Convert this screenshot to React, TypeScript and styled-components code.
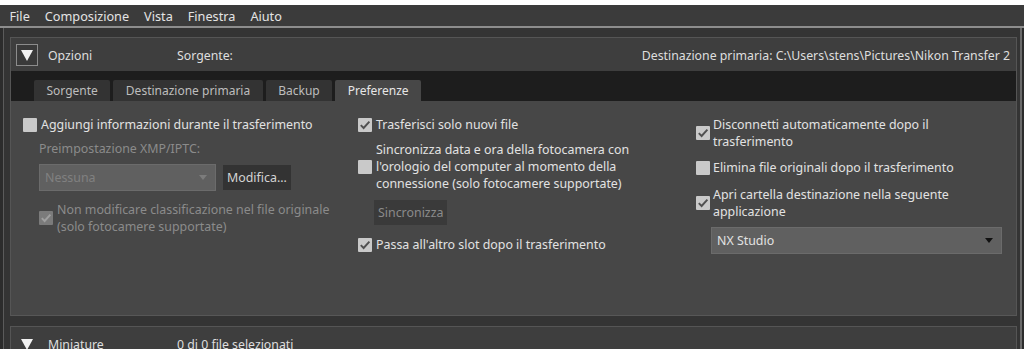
import React from "react";
import styled, { createGlobalStyle, css } from "styled-components";

const GlobalStyle = createGlobalStyle`
  html, body { margin: 0; padding: 0; background: #ffffff; }
  body { font-family: "Noto Sans", "Open Sans", sans-serif; font-size: 12.4px; }
  * { box-sizing: border-box; }
`;

const Page = styled.div`
  width: 1024px;
  height: 349px;
  overflow: hidden;
  display: flex;
  flex-direction: column;
  background: #ffffff;
`;

const TopStrip = styled.div`
  height: 5px;
  flex: none;
`;

const MenuBar = styled.div`
  height: 23px;
  flex: none;
  display: flex;
  align-items: center;
  padding-left: 2px;
  background: #3b3b3b;
  border-bottom: 2px solid #8d8d8d;
`;

const MenuItem = styled.span`
  padding: 0 7.5px;
  color: #e4e4e4;
  font-size: 12.7px;
  line-height: 20px;
`;

const Frame = styled.div`
  flex: 1;
  display: flex;
  background: #2c2c2c;
  padding-left: 3px;
  padding-right: 2px;
  min-height: 0;
`;

const Workspace = styled.div`
  flex: 1;
  display: flex;
  flex-direction: column;
  gap: 10px;
  background: #343434;
  border-left: 1px solid #5b5b5b;
  border-right: 2px solid #6a6a6a;
  padding: 9px 3px 0 6px;
  min-height: 0;
`;

const Panel = styled.section`
  border: 1px solid #555555;
  border-bottom-color: #575757;
  background: #3e3e3e;
  flex: none;
`;

const PanelHeader = styled.div`
  height: 33px;
  display: flex;
  align-items: center;
  padding: 1px 6px 0 5px;
  background: #3e3e3e;
  color: #dedede;
  font-size: 12.3px;
`;

const ToggleBox = styled.div<{ $framed?: boolean }>`
  width: 22px;
  height: 22px;
  display: flex;
  align-items: center;
  justify-content: center;
  border: 1px solid ${(p) => (p.$framed ? "#8c8c8c" : "transparent")};
  background: ${(p) => (p.$framed ? "#3a3a3a" : "transparent")};
  margin-right: 10px;
  margin-top: -1px;
  flex: none;
`;

const Triangle = styled.span`
  width: 0;
  height: 0;
  border-left: 6.5px solid transparent;
  border-right: 6.5px solid transparent;
  border-top: 11px solid #f2f2f2;
  margin-top: 1px;
`;

const HeaderTitle = styled.span`
  width: 129px;
  flex: none;
`;

const HeaderInfo = styled.span`
  flex: 1;
`;

const HeaderRight = styled.span`
  white-space: nowrap;
`;

const TabBar = styled.div`
  height: 30px;
  display: flex;
  align-items: flex-end;
  gap: 3px;
  padding-left: 23px;
  background: #1d1d1d;
`;

const Tab = styled.div<{ $active?: boolean }>`
  height: 21px;
  padding: 0 12.5px;
  display: flex;
  align-items: center;
  font-size: 12px;
  border-radius: 2px 2px 0 0;
  background: ${(p) => (p.$active ? "#474747" : "#333333")};
  color: ${(p) => (p.$active ? "#e6e6e6" : "#bdbdbd")};
`;

const TabContent = styled.div`
  height: 214px;
  background: #474747;
  display: grid;
  grid-template-columns: 335px 338px 1fr;
  padding: 15px 0 0 12px;
`;

const Column = styled.div`
  display: flex;
  flex-direction: column;
  align-items: flex-start;
`;

const CheckRow = styled.div<{ $indent?: number; $gap?: number; $disabled?: boolean; $mt?: number }>`
  display: flex;
  align-items: center;
  gap: ${(p) => p.$gap ?? 4}px;
  margin-left: ${(p) => p.$indent ?? 0}px;
  margin-top: ${(p) => p.$mt ?? 0}px;
  color: ${(p) => (p.$disabled ? "#8b8b8b" : "#e2e2e2")};
  font-size: 12.4px;
  line-height: 17px;
`;

const Box = styled.span<{ $disabled?: boolean }>`
  width: 14px;
  height: 14px;
  flex: none;
  display: flex;
  align-items: center;
  justify-content: center;
  border-radius: 1px;
  background: ${(p) => (p.$disabled ? "#7b7b7b" : "#c9c9c9")};
`;

const Label = styled.span``;

const Caption = styled.div<{ $indent?: number; $mt?: number }>`
  margin-left: ${(p) => p.$indent ?? 0}px;
  margin-top: ${(p) => p.$mt ?? 0}px;
  color: #8b8b8b;
  font-size: 12.4px;
  line-height: 17px;
`;

const ControlRow = styled.div<{ $indent?: number; $mt?: number }>`
  display: flex;
  align-items: center;
  gap: 7px;
  margin-left: ${(p) => p.$indent ?? 0}px;
  margin-top: ${(p) => p.$mt ?? 0}px;
`;

const Select = styled.div<{ $width: number; $disabled?: boolean }>`
  width: ${(p) => p.$width}px;
  height: 27px;
  display: flex;
  align-items: center;
  justify-content: space-between;
  padding: 0 8px 0 5px;
  background: #606060;
  border: 1px solid #6b6b6b;
  font-size: 12.4px;
  color: ${(p) => (p.$disabled ? "#808080" : "#e2e2e2")};
`;

const Arrow = styled.span<{ $disabled?: boolean }>`
  width: 0;
  height: 0;
  border-left: 4.5px solid transparent;
  border-right: 4.5px solid transparent;
  border-top: 5px solid ${(p) => (p.$disabled ? "#7c7c7c" : "#111111")};
`;

const Button = styled.div<{ $disabled?: boolean; $mt?: number; $indent?: number }>`
  height: 25px;
  display: inline-flex;
  align-items: center;
  padding: 0 4px;
  margin-top: ${(p) => p.$mt ?? 0}px;
  margin-left: ${(p) => p.$indent ?? 0}px;
  font-size: 12.4px;
  ${(p) =>
    p.$disabled
      ? css`
          background: #3a3a3a;
          color: #8b8b8b;
        `
      : css`
          background: #333333;
          color: #d4d4d4;
        `}
`;

const Check = ({ on, disabled }: { on?: boolean; disabled?: boolean }) => (
  <Box $disabled={disabled}>
    {on && (
      <svg width="12" height="12" viewBox="0 0 12 12">
        <path
          d="M1.8 6.2 L4.6 9 L10.4 2.6"
          fill="none"
          stroke={disabled ? "#a0a0a0" : "#505050"}
          strokeWidth="1.9"
        />
      </svg>
    )}
  </Box>
);

export default function App() {
  return (
    <>
      <GlobalStyle />
      <Page>
        <TopStrip />
        <MenuBar>
          {["File", "Composizione", "Vista", "Finestra", "Aiuto"].map((m) => (
            <MenuItem key={m}>{m}</MenuItem>
          ))}
        </MenuBar>
        <Frame>
          <Workspace>
            <Panel>
              <PanelHeader>
                <ToggleBox $framed>
                  <Triangle />
                </ToggleBox>
                <HeaderTitle>Opzioni</HeaderTitle>
                <HeaderInfo>Sorgente:</HeaderInfo>
                <HeaderRight>
                  Destinazione primaria: C:\Users\stens\Pictures\Nikon Transfer 2
                </HeaderRight>
              </PanelHeader>
              <TabBar>
                <Tab>Sorgente</Tab>
                <Tab>Destinazione primaria</Tab>
                <Tab>Backup</Tab>
                <Tab $active>Preferenze</Tab>
              </TabBar>
              <TabContent>
                <Column>
                  <CheckRow>
                    <Check />
                    <Label>Aggiungi informazioni durante il trasferimento</Label>
                  </CheckRow>
                  <Caption $indent={16} $mt={7}>
                    Preimpostazione XMP/IPTC:
                  </Caption>
                  <ControlRow $indent={16} $mt={7}>
                    <Select $width={177} $disabled>
                      <span>Nessuna</span>
                      <Arrow $disabled />
                    </Select>
                    <Button>Modifica...</Button>
                  </ControlRow>
                  <CheckRow $indent={16} $mt={10} $disabled>
                    <Check on disabled />
                    <Label>
                      Non modificare classificazione nel file originale
                      <br />
                      (solo fotocamere supportate)
                    </Label>
                  </CheckRow>
                </Column>
                <Column>
                  <CheckRow>
                    <Check on />
                    <Label>Trasferisci solo nuovi file</Label>
                  </CheckRow>
                  <CheckRow $mt={8}>
                    <Check />
                    <Label>
                      Sincronizza data e ora della fotocamera con
                      <br />
                      l'orologio del computer al momento della
                      <br />
                      connessione (solo fotocamere supportate)
                    </Label>
                  </CheckRow>
                  <Button $disabled $mt={8} $indent={16}>
                    Sincronizza
                  </Button>
                  <CheckRow $mt={11}>
                    <Check on />
                    <Label>Passa all'altro slot dopo il trasferimento</Label>
                  </CheckRow>
                </Column>
                <Column>
                  <CheckRow $gap={3}>
                    <Check on />
                    <Label>
                      Disconnetti automaticamente dopo il
                      <br />
                      trasferimento
                    </Label>
                  </CheckRow>
                  <CheckRow $gap={3} $mt={9}>
                    <Check />
                    <Label>Elimina file originali dopo il trasferimento</Label>
                  </CheckRow>
                  <CheckRow $gap={3} $mt={10}>
                    <Check on />
                    <Label>
                      Apri cartella destinazione nella seguente
                      <br />
                      applicazione
                    </Label>
                  </CheckRow>
                  <ControlRow $indent={15} $mt={7}>
                    <Select $width={291}>
                      <span>NX Studio</span>
                      <Arrow />
                    </Select>
                  </ControlRow>
                </Column>
              </TabContent>
            </Panel>
            <Panel>
              <PanelHeader>
                <ToggleBox>
                  <Triangle />
                </ToggleBox>
                <HeaderTitle>Miniature</HeaderTitle>
                <HeaderInfo>0 di 0 file selezionati</HeaderInfo>
              </PanelHeader>
            </Panel>
          </Workspace>
        </Frame>
      </Page>
    </>
  );
}
